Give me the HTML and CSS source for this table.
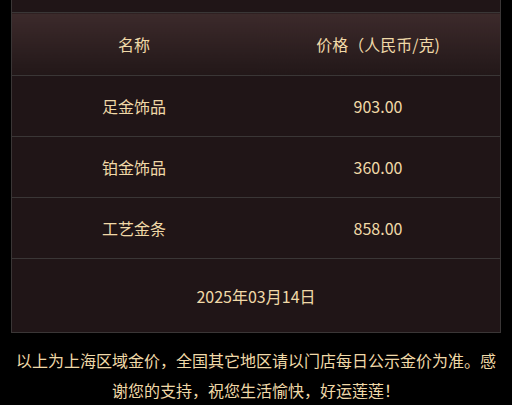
FILE: index.html
```html
<!DOCTYPE html>
<html lang="zh-CN">
<head>
  <meta charset="UTF-8">
  <title>金价</title>
  <link rel="stylesheet" href="styles.css">
</head>
<body>
  <div class="wrap">
    <div class="top-strip"></div>
    <table class="price-table">
      <thead>
        <tr>
          <th>名称</th>
          <th>价格（人民币/克)</th>
        </tr>
      </thead>
      <tbody>
        <tr>
          <td>足金饰品</td>
          <td>903.00</td>
        </tr>
        <tr>
          <td>铂金饰品</td>
          <td>360.00</td>
        </tr>
        <tr>
          <td>工艺金条</td>
          <td>858.00</td>
        </tr>
        <tr class="date-row">
          <td colspan="2">2025年03月14日</td>
        </tr>
      </tbody>
    </table>
    <p class="notice">以上为上海区域金价，全国其它地区请以门店每日公示金价为准。感谢您的支持，祝您生活愉快，好运莲莲！</p>
  </div>
</body>
</html>
```

FILE: styles.css
```css
* { margin: 0; padding: 0; box-sizing: border-box; }
html, body {
  background-color: #000;
  font-family: "Noto Sans CJK SC", "Noto Sans", sans-serif;
  color: #f0d9a8;
  overflow: hidden;
}
.wrap {
  padding: 0 11px;
}
.top-strip {
  height: 12px;
  background-color: #201517;
  border-left: 1px solid #3a3636;
  border-right: 1px solid #3a3636;
}
.price-table {
  width: 100%;
  border-collapse: collapse;
  table-layout: fixed;
  background-color: #201517;
  border: 1px solid #3a3636;
  font-size: 16px;
}
.price-table th,
.price-table td {
  border-top: 1px solid #3a3636;
  border-bottom: 1px solid #3a3636;
  text-align: center;
  font-weight: normal;
  line-height: 20px;
}
.price-table th {
  height: 63px;
  background: linear-gradient(to bottom, #3c2a2b, #221718);
}
.price-table td {
  height: 61px;
}
.price-table .date-row td {
  height: 74px;
}
.notice {
  margin-top: 12px;
  text-align: center;
  font-size: 16px;
  line-height: 30px;
}
```
